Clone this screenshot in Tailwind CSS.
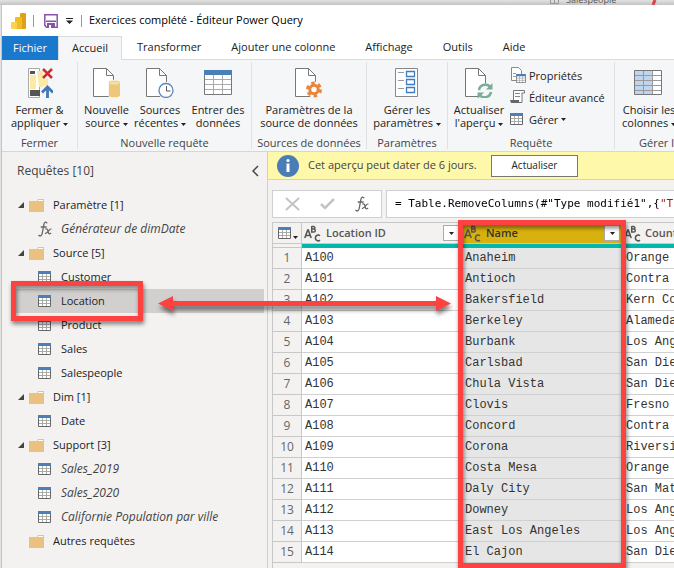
<!DOCTYPE html>
<html lang="fr">
<head>
<meta charset="utf-8">
<title>Éditeur Power Query</title>
<script src="https://cdn.jsdelivr.net/npm/@tailwindcss/browser@4"></script>
</head>
<body class="relative flex h-screen flex-col overflow-hidden bg-[#e3e2e2] font-['Open_Sans','Noto_Sans',sans-serif] text-[11px] text-[#222]">
<svg class="hidden">
  <symbol id="tbl" viewBox="0 0 13 12"><path fill="#fff" d="M0 0h13v12H0z"/><path stroke="#aaa" d="M4.500 3v9M8.500 3v9M1 5.500h11M1 8.500h11" fill="none"/><path d="M.5 2v9.500h12V2" fill="none" stroke="#666"/><path fill="#4a7fb8" d="M0 0h13v3H0z"/></symbol>
  <symbol id="folder" viewBox="0 0 15 13"><path fill="#e9c282" d="M0 2h8l1-2h6v13H0z"/><path fill="#fff" d="M9.500 1H14v1H9z"/></symbol>
  <symbol id="tri" viewBox="0 0 6 6"><path fill="#444" d="M6 0v6H0z"/></symbol>
  <symbol id="dn" viewBox="0 0 5 3"><path fill="#222" d="M0 0h5L2.500 3z"/></symbol>
  <symbol id="page" viewBox="0 0 21 29"><path d="M.5.5h13l7 7v21H.5z" fill="#fff" stroke="#777"/><path d="M13.500.5v7h7" fill="none" stroke="#777"/></symbol>
  <symbol id="abc" viewBox="0 0 17 17"><g fill="none" stroke="#555" stroke-width="1.600"><path d="M.8 13 3.700 5h.6l2.900 8M2 10.500h4"/><path stroke-width="1.400" d="M7.700 1v6h2c2.200 0 2.200-3 0-3h-2 1.800c1.900 0 1.900-2.500 0-2.500H7.700"/><path d="M16 10.700c-1.800-1.500-4.600-.6-4.600 2.200s2.800 3.700 4.600 2.200"/></g></symbol>
  <symbol id="fx" viewBox="0 0 14 16"><g fill="none" stroke="#666" stroke-linecap="round"><path stroke-width="1.300" d="M8.800 1.800C7.500.3 6.300 1.300 5.900 3.300L4.200 12.500c-.4 2-1.700 3-3.300 1.900M3.200 6h5"/><path stroke-width="1.200" d="M7.600 8c2-.8 2 1 2.600 3s1 2.300 2.600 1.300M13 8c-2-.5-3 4.800-5.700 4.300"/></g></symbol>
</svg>

<div class="flex h-[5px] shrink-0 justify-end overflow-hidden bg-gradient-to-b from-[#e3e2e2] to-[#c4c3c3]">
  <svg class="h-[5px] w-[16px]" viewBox="0 0 16 5"><path fill="none" stroke="#999" d="M4.500 0v4M8.500 0v4M12.500 0v4M4 3.500h9"/></svg>
  <span class="flex w-[88px] items-end pl-1 text-[9px] leading-[10px] text-[#555]">Salespeople</span>
  <svg class="h-[5px] w-6" viewBox="0 0 24 5"><path stroke="#e04040" stroke-width="3" d="M5 0 3 5"/></svg>
</div>

<div class="ml-px flex min-h-0 flex-1 flex-col border-l border-[#c4c4c4] bg-white">
  <header class="flex h-[31px] shrink-0 items-center pl-[9px]">
    <svg class="h-4 w-[15px]" viewBox="0 0 15 16"><rect x="9" width="6" height="16" rx="1" fill="#e0a214"/><rect x="4" y="4" width="7" height="12" rx="1" fill="#efbd24"/><rect y="9" width="6" height="7" rx="1" fill="#f8d450"/></svg>
    <span class="ml-[7px] h-3 w-px bg-[#999]"></span>
    <button class="ml-[10px]" aria-label="Enregistrer"><svg class="block h-[14px] w-[14px]" viewBox="0 0 14 14"><path fill="#fff" stroke="#8a52a8" stroke-width="1.500" d="M.8.8h12.400v12.400H2.600L.8 11.400z"/><path fill="#8a52a8" d="M2 6.500h10V8H2zM3 9h8v5H3z"/><path fill="#fff" d="M5 11h2v3H5z"/></svg></button>
    <button class="ml-2" aria-label="Personnaliser"><svg class="block h-[6px] w-[7px]" viewBox="0 0 7 6"><path fill="#222" d="M0 0h7v1H0zM0 2.500h7L3.500 6z"/></svg></button>
    <span class="ml-2 h-3 w-px bg-[#999]"></span>
    <h1 class="ml-[7px] text-black">Exercices complété - Éditeur Power Query</h1>
  </header>

  <nav class="flex h-6 shrink-0 border-b border-[#dadbdc]">
    <button class="-mb-px w-14 bg-[#1a78cd] text-white">Fichier</button>
    <button class="-mb-px w-16 border-x border-t border-[#dadbdc] bg-[#f5f6f7]">Accueil</button>
    <div class="ml-[15px] flex gap-[30px]">
      <button>Transformer</button>
      <button>Ajouter une colonne</button>
      <button>Affichage</button>
      <button>Outils</button>
      <button>Aide</button>
    </div>
  </nav>

  <section class="flex h-[92px] shrink-0 overflow-hidden border-b border-[#d5d6d7] bg-[#f5f6f7] py-0.5 text-center leading-[13px] whitespace-nowrap">
    <div class="flex w-[76px] shrink-0 flex-col border-r border-[#e0e1e2]">
      <button class="flex flex-col items-center pt-1.5">
        <svg class="h-[30px] w-[26px]" viewBox="0 0 26 30"><path fill="#fff" stroke="#aaa" d="M1.500.5h11v29h-11z"/><path fill="#555" d="M3 3h5v3H3zM3 22h10v6H3z"/><path fill="#fbe9a5" d="M3 7h6v14H3zM10 3h6v16h-4zM15 12l6-2v8h-6z"/><path stroke="#cf2a2f" stroke-width="2.500" d="M16 1l9 9M25 1l-9 9"/><path fill="none" stroke="#4377b5" stroke-width="2.800" d="M20.500 30V20M15 24.500l5.500-5.500 5.500 5.500"/></svg>
        <span class="mt-[5px]">Fermer &amp;<br>appliquer <svg class="inline h-[3px] w-[5px]"><use href="#dn"/></svg></span>
      </button>
      <span class="mt-auto text-[#444]">Fermer</span>
    </div>
    <div class="flex w-[174px] shrink-0 flex-col border-r border-[#e0e1e2]">
      <div class="flex">
        <button class="flex w-[57px] flex-col items-center pt-1.5">
          <svg class="h-[30px] w-7" viewBox="0 0 28 30"><use href="#page" width="21" height="29"/><path fill="#eec878" stroke="#f5f6f7" d="M15.500 14.500c0-3 12-3 12 0v13c0 3-12 3-12 0z"/><ellipse cx="21.500" cy="15" rx="5" ry="1.500" fill="#f8dfa4"/></svg>
          <span class="mt-[5px]">Nouvelle<br>source <svg class="inline h-[3px] w-[5px]"><use href="#dn"/></svg></span>
        </button>
        <button class="flex w-[50px] flex-col items-center pt-1.5">
          <svg class="h-[30px] w-7" viewBox="0 0 28 30"><use href="#page" width="21" height="29"/><circle cx="20" cy="22.500" r="7" fill="#fff" stroke="#f5f6f7" stroke-width="3"/><circle cx="20" cy="22.500" r="7" fill="#fff" stroke="#5a88c0" stroke-width="1.300"/><path fill="none" stroke="#555" d="M20.500 18v5h4"/></svg>
          <span class="mt-[5px]">Sources<br>récentes <svg class="inline h-[3px] w-[5px]"><use href="#dn"/></svg></span>
        </button>
        <button class="flex flex-1 flex-col items-center pt-1.5">
          <svg class="h-[30px] w-7" viewBox="0 0 28 30"><path fill="#fff" stroke="#777" d="M.5 2.500h27v24H.5z"/><path stroke="#aaa" d="M9.500 7v19M18.500 7v19M1 11.500h26M1 16.500h26M1 21.500h26"/><path fill="#4a7fb8" d="M0 2h28v5H0z"/></svg>
          <span class="mt-[5px]">Entrer des<br>données</span>
        </button>
      </div>
      <span class="mt-auto text-[#444]">Nouvelle requête</span>
    </div>
    <div class="flex w-[115px] shrink-0 flex-col border-r border-[#e0e1e2]">
      <button class="flex flex-col items-center pt-1.5">
        <svg class="h-[30px] w-7" viewBox="0 0 28 30"><use href="#page" width="21" height="29"/><circle cx="19" cy="21.500" r="8" fill="#f5f6f7"/><circle cx="19" cy="21.500" r="6.500" fill="none" stroke="#e8853c" stroke-width="3" stroke-dasharray="3.400 3.400"/><circle cx="19" cy="21.500" r="4.200" fill="#fff" stroke="#e8853c" stroke-width="3"/></svg>
        <span class="mt-[5px]">Paramètres de la<br>source de données</span>
      </button>
      <span class="mt-auto text-[#444]">Sources de données</span>
    </div>
    <div class="flex w-[81px] shrink-0 flex-col border-r border-[#e0e1e2]">
      <button class="flex flex-col items-center pt-1.5">
        <svg class="h-[30px] w-6" viewBox="0 0 24 30"><path fill="#fff" stroke="#888" d="M.5.5h22v28H.5z"/><path stroke="#999" d="M3 4.500h6M3 12.500h6M3 20.500h6"/><path fill="#fff" stroke="#3f7cc0" stroke-width="1.300" d="M11.500 3.500h8v5h-8zM11.500 11.500h8v5h-8zM11.500 19.500h8v5h-8z"/></svg>
        <span class="mt-[5px]">Gérer les<br>paramètres <svg class="inline h-[3px] w-[5px]"><use href="#dn"/></svg></span>
      </button>
      <span class="mt-auto text-[#444]">Paramètres</span>
    </div>
    <div class="flex w-[167px] shrink-0 flex-col border-r border-[#e0e1e2]">
      <div class="flex">
        <button class="flex w-[62px] flex-col items-center pt-1.5">
          <svg class="h-[30px] w-7" viewBox="0 0 28 30"><use href="#page" width="21" height="29"/><circle cx="20" cy="23" r="7.500" fill="#f5f6f7"/><g fill="none" stroke="#78ad98" stroke-width="2.500"><path d="M14 22c1-6 9-7 11.500-2.500M26 24c-1 6-9 7-11.500 2.500"/></g><path fill="#78ad98" d="M27.500 15v6.500H21zM12.500 31v-6.500H19z"/></svg>
          <span class="mt-[5px]">Actualiser<br>l'aperçu <svg class="inline h-[3px] w-[5px]"><use href="#dn"/></svg></span>
        </button>
        <div class="flex flex-col items-start">
          <button class="flex h-[22px] items-center gap-[3px] pt-1"><svg class="h-4 w-4" viewBox="0 0 16 16"><path fill="#fff" stroke="#888" d="M1.500.5h7l3 3v10h-10z"/><path stroke="#999" d="M3 6.500h3M3 9.500h3"/><svg x="6" y="7" width="10" height="9"><use href="#tbl" width="10" height="9"/></svg></svg>Propriétés</button>
          <button class="flex h-[22px] items-center gap-[3px] pt-1"><svg class="h-4 w-4" viewBox="0 0 16 16"><path fill="#fff" stroke="#777" d="M3.500 11V1.500h11V4H12v9.500H2"/><path stroke="#888" d="M5 4.500h5M5 7.500h5"/><path fill="#666" d="M0 11h9v3H1z"/></svg>Éditeur avancé</button>
          <button class="flex h-[22px] items-center gap-[3px] pt-1"><svg class="mr-[3px] h-3 w-[13px]"><use href="#tbl"/></svg>Gérer <svg class="h-[3px] w-[5px]"><use href="#dn"/></svg></button>
        </div>
      </div>
      <span class="mt-auto text-[#444]">Requête</span>
    </div>
    <div class="flex min-w-0 flex-1 flex-col items-start overflow-hidden">
      <button class="flex flex-col items-start pt-1.5 pl-[7px]">
        <svg class="ml-3 h-[30px] w-7" viewBox="0 0 28 30"><path fill="#fff" stroke="#777" d="M.5 2.500h27v24H.5z"/><path fill="#bfd5ee" d="M1 3h18v23H1z"/><path stroke="#999" d="M9.500 3v23M18.500 3v23M1 7.500h26M1 12.500h26M1 17.500h26M1 22.500h26"/></svg>
        <span class="mt-[5px]">Choisir les<br>colonnes <svg class="inline h-[3px] w-[5px]"><use href="#dn"/></svg></span>
      </button>
      <span class="mt-auto pl-6 text-[#444]">Gérer l</span>
    </div>
  </section>

  <main class="flex min-h-0 flex-1 bg-[#f3f2f1]">
    <aside class="flex w-[266px] shrink-0 flex-col border-r border-[#cfcfcf]">
      <div class="flex h-[41px] items-center justify-between pr-2 pb-1 pl-[15px]">
        <h2 class="text-xs text-[#444]">Requêtes [10]</h2>
        <button aria-label="Réduire"><svg class="block h-3 w-[7px]" viewBox="0 0 7 12"><path fill="none" stroke="#444" stroke-width="1.500" d="M6 1L1 6l5 5"/></svg></button>
      </div>
      <ul id="tree"></ul>
    </aside>

    <section class="flex min-w-0 flex-1 flex-col overflow-hidden">
      <div class="flex h-7 shrink-0 items-center border-b border-[#dcd88c] bg-[#fef8ab] pl-[9px] whitespace-nowrap">
        <svg class="h-[22px] w-[22px]" viewBox="0 0 22 22"><circle cx="11" cy="11" r="11" fill="#4a7db5"/><circle cx="11" cy="5.500" r="1.600" fill="#fff"/><path fill="#fff" d="M9.500 8.500h3V17h-3z"/></svg>
        <span class="ml-[9px] w-[183px] text-[#444]">Cet aperçu peut dater de 6 jours.</span>
        <button class="h-[22px] w-[87px] border border-[#777] bg-white text-[10px]">Actualiser</button>
      </div>
      <div class="mt-2.5 ml-1 flex h-7 shrink-0 gap-1">
        <div class="flex w-[110px] items-center justify-between border border-[#d0d0d0] bg-white pr-3 pl-3">
          <button aria-label="Annuler"><svg class="block h-[14px] w-[15px]" viewBox="0 0 15 14"><path stroke="#c4c4c4" stroke-width="2" d="M1 1l13 12M14 1L1 13"/></svg></button>
          <button aria-label="Valider"><svg class="block h-3 w-[15px]" viewBox="0 0 15 12"><path fill="none" stroke="#c4c4c4" stroke-width="2.500" d="M1 6l4 4 9-9"/></svg></button>
          <button aria-label="Fonction"><svg class="block h-4 w-[14px]"><use href="#fx"/></svg></button>
        </div>
        <div class="flex min-w-0 flex-1 border-y border-l border-[#d0d0d0] bg-white pl-2">
          <input aria-label="Formule" class="min-w-0 flex-1 bg-[linear-gradient(90deg,#000_263px,#a31515_263px)] bg-clip-text font-['DejaVu_Sans_Mono',monospace] text-[11px] text-transparent" value='= Table.RemoveColumns(#"Type modifié1",{"Ti'>
        </div>
      </div>
      <div class="mt-1 ml-1 min-h-0 flex-1 overflow-hidden border-t border-l border-[#c8c8c8]">
        <table class="w-full table-fixed border-separate border-spacing-0 whitespace-nowrap">
          <colgroup><col class="w-[29px]"><col class="w-[160px]"><col class="w-[161px]"><col></colgroup>
          <thead>
            <tr class="h-[21px] text-left text-[#555]">
              <th class="border-r border-b border-[#c8c8c8] p-0"><button class="flex items-end gap-0.5 pl-[5px]" aria-label="Options de table"><svg class="h-3 w-[13px]"><use href="#tbl"/></svg><svg class="h-[3px] w-[5px]"><use href="#dn"/></svg></button></th>
              <th class="border-b border-[#c8c8c8] p-0 pl-0.5"><div class="flex items-center gap-[5px] pr-[3px]"><svg class="h-[17px] w-[17px]"><use href="#abc"/></svg><span class="flex-1 font-semibold">Location ID</span><button aria-label="Filtrer Location ID" class="flex h-4 w-4 items-center justify-center border border-[#aaa] bg-white"><svg class="h-[3px] w-[5px]"><use href="#dn"/></svg></button></div></th>
              <th class="border-b border-[#c8c8c8] bg-[#d9b10e] p-0 pl-0.5"><div class="flex items-center gap-[5px] pr-[3px]"><svg class="h-[17px] w-[17px]"><use href="#abc"/></svg><span class="flex-1 font-semibold text-[#333]">Name</span><button aria-label="Filtrer Name" class="flex h-4 w-4 items-center justify-center border border-[#aaa] bg-white"><svg class="h-[3px] w-[5px]"><use href="#dn"/></svg></button></div></th>
              <th class="overflow-hidden border-b border-[#c8c8c8] p-0 pl-px"><div class="flex items-center gap-1"><svg class="h-[17px] w-[17px] shrink-0"><use href="#abc"/></svg><span class="font-semibold">Count</span></div></th>
            </tr>
            <tr class="h-1"><td class="border-r border-b border-[#c8c8c8] p-0"></td><td colspan="3" class="bg-[#01b8aa] p-0"></td></tr>
          </thead>
          <tbody id="rows" class="font-['Liberation_Mono',monospace] text-xs text-[#333]"></tbody>
        </table>
      </div>
    </section>
  </main>
</div>

<!-- Annotations laid over the window -->
<div class="absolute top-[281px] left-[11px] h-10 w-[132px] border-[5px] border-[#fd4242] drop-shadow-[1px_3px_2px_rgb(0_0_0/0.5)]"></div>
<div class="absolute top-[220px] left-[458px] h-[348px] w-[168px] border-[5px] border-[#fd4242] drop-shadow-[1px_3px_2px_rgb(0_0_0/0.5)]"></div>
<svg class="absolute top-[296px] left-[158px] h-4 w-[293px] overflow-visible drop-shadow-[1px_4px_2px_rgb(0_0_0/0.5)]" viewBox="0 0 293 16"><path fill="#fd4242" d="M0 7.500 15 0v5h263V0l15 7.500L278 15v-5H15v5z"/></svg>

<script>
const tree = [['g','Paramètre [1]'],['f','Générateur de dimDate'],['g','Source [5]'],['t','Customer'],['s','Location'],['t','Product'],['t','Sales'],['t','Salespeople'],['g','Dim [1]'],['t','Date'],['g','Support [3]'],['i','Sales_2019'],['i','Sales_2020'],['i','Californie Population par ville'],['o','Autres requêtes']];
document.getElementById('tree').innerHTML = tree.map(([k, label]) => {
  if (k === 'g' || k === 'o') return `<li><button class="flex h-6 w-full items-center pl-4"><svg class="mr-[5px] h-[6px] w-[6px]">${k === 'g' ? '<use href="#tri"/>' : ''}</svg><svg class="mr-[9px] h-[13px] w-[15px]"><use href="#folder"/></svg>${label}</button></li>`;
  const icon = k === 'f' ? '<svg class="mr-[9px] h-4 w-[14px]"><use href="#fx"/></svg>' : '<svg class="mr-[10px] h-3 w-[13px]"><use href="#tbl"/></svg>';
  const tone = k === 's' ? 'bg-[#d2d0ce]' : k === 't' ? '' : 'text-xs italic text-[#444]';
  return `<li class="pr-[3px] pl-3.5"><button class="flex h-6 w-full items-center pl-[22px] ${tone}">${icon}${label}</button></li>`;
}).join('');
const rows = [['Anaheim','Orange'],['Antioch','Contra'],['Bakersfield','Kern Co'],['Berkeley','Alameda'],['Burbank','Los Ang'],['Carlsbad','San Die'],['Chula Vista','San Die'],['Clovis','Fresno'],['Concord','Contra'],['Corona','Riversi'],['Costa Mesa','Orange'],['Daly City','San Mat'],['Downey','Los Ang'],['East Los Angeles','Los Ang'],['El Cajon','San Die']];
document.getElementById('rows').innerHTML = rows.map(([name, county], i) => `<tr class="h-[21px]"><td class="border-r border-b border-[#c8c8c8] p-0 text-center font-['Open_Sans',sans-serif] text-[#666]">${i + 1}</td><td class="border-b border-[#d0d0d0] bg-white p-0 pl-[3px]">A${100 + i}</td><td class="border-b border-[#d0d0d0] bg-[#e6e6e6] p-0 pl-[3px]">${name}</td><td class="border-b border-[#d0d0d0] bg-white p-0 pl-[3px]">${county}</td></tr>`).join('');
</script>
</body>
</html>
